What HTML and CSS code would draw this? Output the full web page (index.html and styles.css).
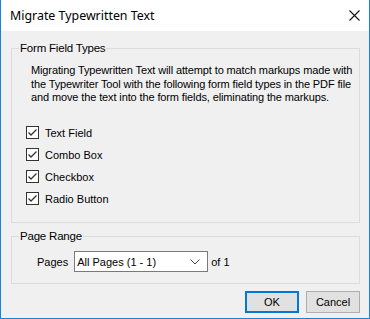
FILE: index.html
```html
<!DOCTYPE html>
<html>
    <head>
        <meta charset='utf-8'/>
        <title>Migrate Typewritten Text</title>
        <link rel="stylesheet" href="styles.css">
    </head>
    <body>
        <div id="dialog">
            <div class="titlebar">
                <span class="title">Migrate Typewritten Text</span>
                <svg class="close" width="11" height="11" viewBox="0 0 11 11">
                    <path d="M0.5 0.5 L10.5 10.5 M10.5 0.5 L0.5 10.5" stroke="#111" stroke-width="1.1" fill="none"/>
                </svg>
            </div>
            <div class="content">
                <fieldset class="group types">
                    <legend>Form Field Types</legend>
                    <p class="note">Migrating Typewritten Text will attempt to match markups made with the Typewriter Tool with the following form field types in the PDF file and move the text into the form fields, eliminating the markups.</p>
                    <ul class="checks">
                        <li><span class="box"><svg width="11" height="11" viewBox="0 0 11 11"><path d="M1.5 5.5 L4 8 L9.5 2.5" stroke="#333" stroke-width="1.3" fill="none"/></svg></span>Text Field</li>
                        <li><span class="box"><svg width="11" height="11" viewBox="0 0 11 11"><path d="M1.5 5.5 L4 8 L9.5 2.5" stroke="#333" stroke-width="1.3" fill="none"/></svg></span>Combo Box</li>
                        <li><span class="box"><svg width="11" height="11" viewBox="0 0 11 11"><path d="M1.5 5.5 L4 8 L9.5 2.5" stroke="#333" stroke-width="1.3" fill="none"/></svg></span>Checkbox</li>
                        <li><span class="box"><svg width="11" height="11" viewBox="0 0 11 11"><path d="M1.5 5.5 L4 8 L9.5 2.5" stroke="#333" stroke-width="1.3" fill="none"/></svg></span>Radio Button</li>
                    </ul>
                </fieldset>
                <fieldset class="group range">
                    <legend>Page Range</legend>
                    <div class="pages">
                        <span class="label">Pages</span>
                        <div class="select">
                            <span>All Pages (1 - 1)</span>
                            <svg width="10" height="6" viewBox="0 0 10 6"><path d="M0.5 0.5 L5 5 L9.5 0.5" stroke="#444" stroke-width="1" fill="none"/></svg>
                        </div>
                        <span class="of">of 1</span>
                    </div>
                </fieldset>
                <div class="buttons">
                    <button class="btn default">OK</button>
                    <button class="btn">Cancel</button>
                </div>
            </div>
        </div>
    </body>
</html>
```

FILE: styles.css
```css
* {
    margin: 0;
    padding: 0;
    box-sizing: border-box;
}

body {
    font-family: "Liberation Sans", Arial, sans-serif;
    font-size: 11px;
    color: #000;
    background: #f0f0f0;
}

#dialog {
    width: 370px;
    height: 319px;
    background: #f0f0f0;
    border: 1px solid #1883d7;
    border-top: none;
    display: flex;
    flex-direction: column;
}

.titlebar {
    height: 31px;
    background: #fff;
    display: flex;
    align-items: center;
    justify-content: space-between;
    padding: 0 9px 1px 9px;
}

.title {
    font-family: "Noto Sans", "Open Sans", sans-serif;
    font-size: 12.4px;
}

.content {
    padding: 10px 9px 0 10px;
}

.group {
    border: 1px solid #dcdcdc;
    min-width: 0;
}

.group legend {
    margin-left: 7px;
    padding: 0 1px;
    font-size: 11.5px;
    line-height: 14px;
    letter-spacing: -0.2px;
}

.types {
    height: 182px;
}

.note {
    margin: 9px 4px 0 19px;
    line-height: 13.5px;
    letter-spacing: -0.12px;
}

.checks {
    list-style: none;
    margin: 17px 0 0 14px;
}

.checks li {
    display: flex;
    align-items: center;
    height: 22px;
}

.box {
    width: 13px;
    height: 13px;
    border: 1px solid #333;
    background: #fff;
    margin-right: 6px;
    display: flex;
    align-items: center;
    justify-content: center;
}

.range {
    margin-top: 6px;
    height: 55px;
}

.pages {
    display: flex;
    align-items: center;
    margin: 8px 0 0 25px;
}

.label {
    margin-right: 6px;
}

.select {
    width: 134px;
    height: 21px;
    background: #fff;
    border: 1px solid #7a7a7a;
    display: flex;
    align-items: center;
    justify-content: space-between;
    padding: 0 7px 0 2px;
}

.of {
    margin-left: 3px;
}

.buttons {
    display: flex;
    justify-content: flex-end;
    gap: 7px;
    margin-top: 7px;
}

.btn {
    width: 54px;
    height: 22px;
    background: #e1e1e1;
    border: 1px solid #adadad;
    font-family: "Liberation Sans", Arial, sans-serif;
    font-size: 11px;
}

.btn.default {
    border: 2px solid #0078d7;
}
```
